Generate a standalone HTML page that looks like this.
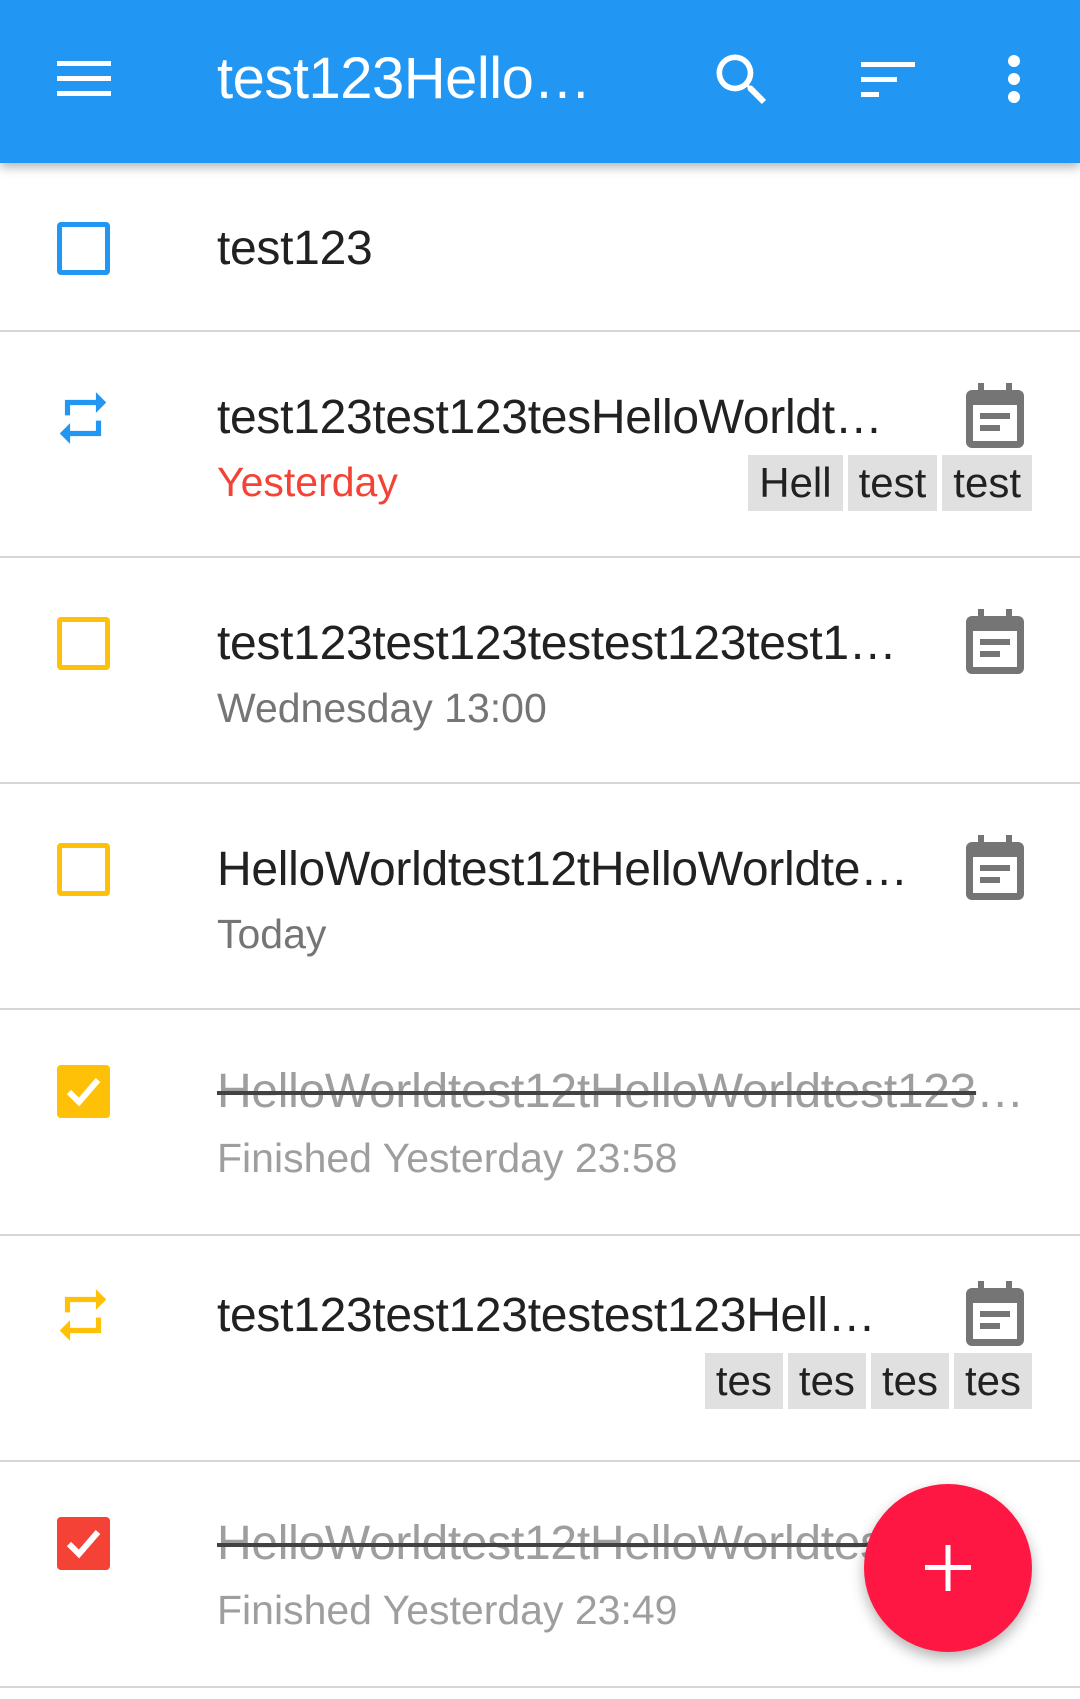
<!DOCTYPE html>
<html><head><meta charset="utf-8"><style>
*{margin:0;padding:0;box-sizing:border-box}
body{width:1080px;height:1699px;background:#fff;font-family:"Liberation Sans",Roboto,sans-serif;position:relative;overflow:hidden}
.bar{position:absolute;left:0;top:0;width:1080px;height:163px;background:#2196f3;box-shadow:0 4px 10px rgba(0,0,0,.3);z-index:2}
.bar .t{position:absolute;left:217px;top:46px;font-size:58px;color:#fff;line-height:66px;letter-spacing:-0.5px}
.row{position:absolute;left:0;width:1080px;height:226px;border-bottom:2px solid #d6d6d6}
.ti{position:absolute;left:217px;font-size:48px;color:#212121;white-space:nowrap;overflow:hidden;text-overflow:ellipsis;line-height:56px;letter-spacing:-0.3px}
.sub{position:absolute;left:217px;font-size:41px;color:#757575;line-height:48px;white-space:nowrap}
.done{color:#9e9e9e;text-decoration:line-through;text-decoration-color:#424242}
.cb{position:absolute;left:57px;width:53px;height:53px;border-radius:4px}
.chips{position:absolute;right:48px;display:flex;gap:5px}
.chip{background:#e0e0e0;height:56px;padding:0 11px;font-size:42px;line-height:56px;color:#212121}
.cal{position:absolute;left:966px}
.ic{position:absolute}
.fab{position:absolute;left:864px;top:1484px;width:168px;height:168px;border-radius:50%;background:#ff1744;box-shadow:0 6px 14px rgba(0,0,0,.3);z-index:3}
</style></head><body>
<div class="bar">
<svg class="ic" style="left:57px;top:59px" width="54" height="40"><rect x="0" y="2" width="54" height="5" fill="#fff"/><rect x="0" y="17" width="54" height="5" fill="#fff"/><rect x="0" y="32" width="54" height="5" fill="#fff"/></svg>
<div class="t">test123Hello…</div>
<svg class="ic" style="left:708px;top:46px" width="68" height="68" viewBox="0 0 24 24"><path fill="#fff" d="M15.5 14h-.79l-.28-.27A6.47 6.47 0 0 0 16 9.5 6.5 6.5 0 1 0 9.5 16c1.61 0 3.09-.59 4.23-1.57l.27.28v.79l5 4.99L20.49 19l-4.99-5zm-6 0C7.01 14 5 11.99 5 9.5S7.01 5 9.5 5 14 7.01 14 9.5 11.99 14 9.5 14z"/></svg>
<svg class="ic" style="left:861px;top:60px" width="54" height="40"><rect x="0" y="2" width="54" height="5" fill="#fff"/><rect x="0" y="17" width="36" height="5" fill="#fff"/><rect x="0" y="32" width="18" height="5" fill="#fff"/></svg>
<svg class="ic" style="left:1005px;top:54px" width="18" height="50"><circle cx="9" cy="7" r="6" fill="#fff"/><circle cx="9" cy="25" r="6" fill="#fff"/><circle cx="9" cy="43" r="6" fill="#fff"/></svg>
</div>

<div class="row" style="top:163px;height:169px">
<div class="cb" style="top:59px;border:5px solid #2196f3"></div>
<div class="ti" style="top:58px">test123</div>
</div>

<svg width="0" height="0" style="position:absolute"><defs>
<symbol id="rep" viewBox="0 0 24 24"><path d="M7 7h10v3l4-4-4-4v3H5v6h2V7zm10 10H7v-3l-4 4 4 4v-3h12v-6h-2v4z"/></symbol>
<symbol id="cal" viewBox="0 0 58 66"><rect x="12" y="0" width="6" height="12" fill="#757575"/><rect x="40" y="0" width="6" height="12" fill="#757575"/><rect x="0" y="7" width="58" height="58" rx="6" fill="#757575"/><rect x="7" y="22" width="44" height="36" fill="#fff"/><rect x="14" y="30" width="30" height="6" fill="#757575"/><rect x="14" y="42" width="20" height="6" fill="#757575"/></symbol>
</defs></svg>

<div class="row" style="top:332px">
<svg class="ic" style="left:52px;top:55px;fill:#2196f3" width="62" height="62"><use href="#rep"/></svg>
<div class="ti" style="top:58px;width:675px">test123test123tesHelloWorldtest123</div>
<svg class="cal" style="top:51px" width="58" height="66"><use href="#cal"/></svg>
<div class="sub" style="top:126px;color:#f44336">Yesterday</div>
<div class="chips" style="top:123px"><div class="chip">Hell</div><div class="chip">test</div><div class="chip">test</div></div>
</div>

<div class="row" style="top:558px">
<div class="cb" style="top:59px;border:5px solid #ffc107"></div>
<div class="ti" style="top:58px;width:697px">test123test123testest123test123test</div>
<svg class="cal" style="top:51px" width="58" height="66"><use href="#cal"/></svg>
<div class="sub" style="top:126px">Wednesday 13:00</div>
</div>

<div class="row" style="top:784px">
<div class="cb" style="top:59px;border:5px solid #ffc107"></div>
<div class="ti" style="top:58px;width:695px">HelloWorldtest12tHelloWorldtest123</div>
<svg class="cal" style="top:51px" width="58" height="66"><use href="#cal"/></svg>
<div class="sub" style="top:126px">Today</div>
</div>

<div class="row" style="top:1010px">
<div class="cb" style="top:55px;background:#ffc107"><svg width="53" height="53" viewBox="0 0 53 53"><path d="M12 27l10 10 19-22" stroke="#fff" stroke-width="6" fill="none"/></svg></div>
<div class="ti done" style="top:54px;width:813px">HelloWorldtest12tHelloWorldtest123test</div>
<div class="sub" style="top:124px;color:#9e9e9e">Finished Yesterday 23:58</div>
</div>

<div class="row" style="top:1236px">
<svg class="ic" style="left:52px;top:48px;fill:#ffc107" width="62" height="62"><use href="#rep"/></svg>
<div class="ti" style="top:52px;width:675px">test123test123testest123HelloWorld</div>
<svg class="cal" style="top:45px" width="58" height="66"><use href="#cal"/></svg>
<div class="chips" style="top:117px"><div class="chip">tes</div><div class="chip">tes</div><div class="chip">tes</div><div class="chip">tes</div></div>
</div>

<div class="row" style="top:1462px">
<div class="cb" style="top:55px;background:#f44336"><svg width="53" height="53" viewBox="0 0 53 53"><path d="M12 27l10 10 19-22" stroke="#fff" stroke-width="6" fill="none"/></svg></div>
<div class="ti done" style="top:54px;width:813px">HelloWorldtest12tHelloWorldtest123test</div>
<div class="sub" style="top:124px;color:#9e9e9e">Finished Yesterday 23:49</div>
</div>

<div class="fab"><svg width="168" height="168"><rect x="61" y="81" width="46" height="5" fill="#fff"/><rect x="81.5" y="61" width="5" height="46" fill="#fff"/></svg></div>
</body></html>
